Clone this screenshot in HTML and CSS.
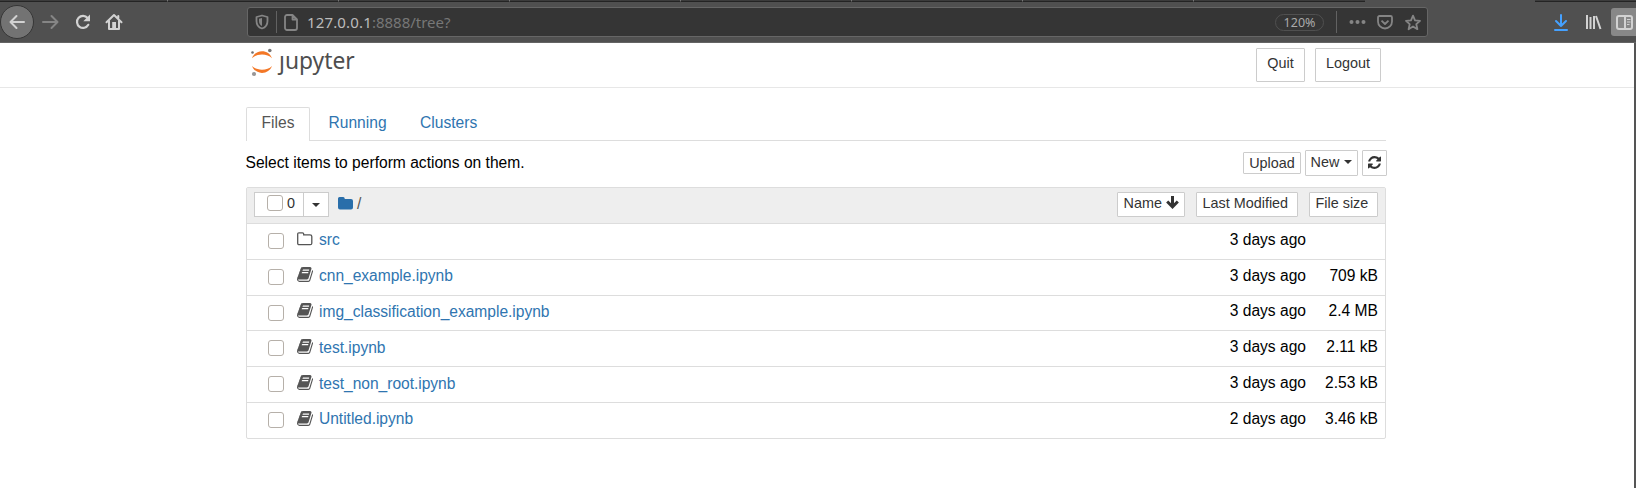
FILE: index.html
```
<!DOCTYPE html>
<html lang="en">
<head>
<meta charset="utf-8">
<title>Home Page - Jupyter</title>
<link rel="stylesheet" href="styles.css">
</head>
<body>
<svg class="defs" aria-hidden="true">
  <symbol id="book" viewBox="0 0 1664 1536"><path d="M1639 350q40 57 18 129l-275 906q-19 64-76.500 107.500t-122.500 43.500h-923q-77 0-148.500-53.500t-99.500-131.500q-24-67-2-127 0-4 3-27t4-37q1-8-3-21.500t-3-19.500q2-11 8-21t16.500-23.500 16.500-23.500q23-38 45-91.500t30-91.500q3-10 .5-30t-.5-28q3-11 17-28t17-23q21-36 42-92t25-90q1-9-2.500-32t.5-28q4-13 22-30.500t22-22.500q19-26 42.500-84.500t27.500-96.500q1-8-3-25.500t-2-26.500q2-8 9-18t18-23 17-21q8-12 16.500-30.500t15-35 16-36 19.500-32 26.500-23.500 36-11.500 47.500 5.500l-1 3q38-9 51-9h761q74 0 114 56t18 130l-274 906q-36 119-71.500 153.500t-128.500 34.500h-869q-27 0-38 15-11 16-1 43 24 70 144 70h923q29 0 56-15.500t35-41.500l300-987q7-22 5-57 38 15 59 43zM575 352q-4 13 2 22.500t20 9.500h608q13 0 25.500-9.500t16.500-22.500l21-64q4-13-2-22.500t-20-9.500h-608q-13 0-25.500 9.500t-16.500 22.500zM492 608q-4 13 2 22.500t20 9.500h608q13 0 25.500-9.500t16.500-22.500l21-64q4-13-2-22.500t-20-9.500h-608q-13 0-25.500 9.500t-16.500 22.500z"/></symbol>
</svg>
<div class="browser">
  <div class="strip"><i class="t first"></i><i class="t"></i><i class="t"></i><i class="t"></i><i class="t"></i><i class="t"></i><i class="t"></i><i class="t"></i><i class="active"></i><i class="t last"></i></div>
  <div class="bar">
    <div class="nav">
      <span class="back"><svg width="18" height="18" viewBox="0 0 18 18"><path d="M16 9H2.500M8.500 3l-6 6 6 6"/></svg></span>
      <svg class="fwd" width="18" height="18" viewBox="0 0 18 18"><path d="M1 9h14M9.500 3l6 6-6 6"/></svg>
      <svg class="rel" width="18" height="18" viewBox="0 0 18 18"><path d="M14.300 11.800A6 6 0 1 1 13.600 5"/><path class="solid" d="M16 1.500v6.700h-6.700z"/></svg>
      <svg class="home" width="18" height="18" viewBox="0 0 18 18"><path d="M1.500 9.300L9 2l7.500 7.300M4 8v8h10V8M13.300 3v3"/><path class="solid" d="M7.200 9h3.800v7H7.200z"/></svg>
    </div>
    <div class="url">
      <svg width="14" height="16" viewBox="0 0 14 16"><path d="M7 1.500L12.500 3v4c0 4-2 6.500-5.500 7.500C3.500 13.500 1.500 11 1.500 7V3z"/><path class="fill" d="M7 4v8C5 11 4 9.500 4 7V4.800z"/></svg>
      <i class="sep"></i>
      <svg class="page" width="14" height="17" viewBox="0 0 14 17"><path d="M3 1h5.500l4.500 4.500V14a2 2 0 0 1-2 2H3a2 2 0 0 1-2-2V3a2 2 0 0 1 2-2zM8.500 1v4.500H13"/></svg>
      <span class="addr"><b>127.0.0.1</b>:8888/tree?</span>
      <span class="pct">120%</span>
      <i class="sep s2"></i>
      <svg class="dots" width="17" height="6" viewBox="0 0 17 6"><circle cx="2.500" cy="3" r="2"/><circle cx="8.500" cy="3" r="2"/><circle cx="14.500" cy="3" r="2"/></svg>
      <svg class="pocket" width="16" height="15" viewBox="0 0 16 15"><path d="M2.500 1h11A1.500 1.500 0 0 1 15 2.500V6.500a7 7 0 0 1-14 0v-4A1.500 1.500 0 0 1 2.500 1zM4.500 5.700L8 9l3.500-3.300"/></svg>
      <svg class="star" width="16" height="17" viewBox="0 0 16 17"><path d="M8 1.600l2 4.700 5 .5-3.700 3.400 1.100 5L8 12.500l-4.400 2.700 1.100-5L1 6.800l5-.5z"/></svg>
    </div>
    <div class="tools">
      <svg width="14" height="17" viewBox="0 0 14 17"><path class="blue" d="M7 1v11M2 7l5 5 5-5M1 16h12"/></svg>
      <svg class="lib" width="17" height="16" viewBox="0 0 17 16"><path d="M2 1v14M5.500 3v12M9 2v13M11 2l4.500 13"/></svg>
      <span class="side"><svg width="17" height="15" viewBox="0 0 17 15"><rect x="1" y="1" width="15" height="13" rx="2"/><path d="M9 1v13"/><path class="thin" d="M11 4.500h3.500M11 7h3.500M11 9.500h2.500"/></svg></span>
    </div>
  </div>
</div>
<div class="viewport">
  <header>
    <div class="container head">
      <div class="logo">
        <svg width="24" height="30" viewBox="0 0 24 30"><path fill="#f37726" d="M2 10.200C3.600 5.800 7.500 3.200 12 3.200s8.400 2.600 10 7c-2.500-2.600-6-3.800-10-3.800s-7.500 1.200-10 3.800zM2 18c2.500 2.500 6 3.700 10 3.700s7.500-1.200 10-3.700c-1.600 4.300-5.500 6.900-10 6.900S3.600 22.300 2 18z"/><circle cx="19.800" cy="2.500" r="1.800" fill="#767677"/><circle cx="4" cy="26" r="2.100" fill="#989798"/><circle cx="2.500" cy="4.500" r="1.300" fill="#6f7070"/></svg>
        <span>ȷupyter</span>
      </div>
      <div class="auth"><button class="big">Quit</button><button class="big">Logout</button></div>
    </div>
  </header>
  <main class="container">
    <nav class="tabs"><a class="on">Files</a><a>Running</a><a>Clusters</a></nav>
    <div class="actions">
      <span>Select items to perform actions on them.</span>
      <div class="btns"><button class="upload">Upload</button><button class="new">New<i class="caret"></i></button><button class="refresh"><svg width="13" height="13" viewBox="0 0 1536 1536"><path d="M1511 928q0 5-1 7-64 268-268 434.500T764 1536q-146 0-282.500-55T238 1324l-129 129q-19 19-45 19t-45-19-19-45V960q0-26 19-45t45-19h448q26 0 45 19t19 45-19 45l-137 137q71 66 161 102t187 36q134 0 250-65t186-179q11-17 53-117 8-23 30-23h192q13 0 22.500 9.500t9.500 22.500zm25-800v448q0 26-19 45t-45 19h-448q-26 0-45-19t-19-45 19-45l138-138Q969 256 768 256q-134 0-250 65T332 500q-11 17-53 117-8 23-30 23H50q-13 0-22.500-9.500T18 608v-7q65-268 270-434.500T768 0q146 0 284 55.500T1297 212l130-129q19-19 45-19t45 19 19 45z"/></svg></button></div>
    </div>
    <div class="list">
      <div class="row lhead">
        <div class="select"><span class="all"><i class="check"></i>0</span><span class="drop"><i class="caret"></i></span></div>
        <svg class="folder" width="15" height="13" viewBox="0 0 15 13"><path d="M1.500 0h3.700q1.500 0 1.500 1.500V2h6.300q2 0 2 2v6.500q0 2-2 2H2q-2 0-2-2v-9Q0 0 1.500 0z"/></svg><span class="slash">/</span>
        <div class="sorts"><button class="name">Name <svg width="13" height="13" viewBox="0 0 13 13"><path d="M6.500 0v10.500M1.200 5.500l5.300 5.300 5.300-5.300"/></svg></button><button class="mod">Last Modified</button><button class="size">File size</button></div>
      </div>
      <div class="row"><i class="check"></i><svg class="icon open" width="16" height="14" viewBox="0 0 16 14"><path d="M2 .8h3.500q1.200 0 1.200 1.200v.8H13q1.800 0 1.800 1.700v6.700q0 1.500-1.500 1.500H2.200Q.7 12.700.7 11.200V2.300Q.7.800 2 .8z"/></svg><a>src</a><span class="date">3 days ago</span><span class="bytes"></span></div>
      <div class="row"><i class="check"></i><svg class="icon" width="16" height="15"><use href="#book"/></svg><a>cnn_example.ipynb</a><span class="date">3 days ago</span><span class="bytes">709 kB</span></div>
      <div class="row"><i class="check"></i><svg class="icon" width="16" height="15"><use href="#book"/></svg><a>img_classification_example.ipynb</a><span class="date">3 days ago</span><span class="bytes">2.4 MB</span></div>
      <div class="row"><i class="check"></i><svg class="icon" width="16" height="15"><use href="#book"/></svg><a>test.ipynb</a><span class="date">3 days ago</span><span class="bytes">2.11 kB</span></div>
      <div class="row"><i class="check"></i><svg class="icon" width="16" height="15"><use href="#book"/></svg><a>test_non_root.ipynb</a><span class="date">3 days ago</span><span class="bytes">2.53 kB</span></div>
      <div class="row"><i class="check"></i><svg class="icon" width="16" height="15"><use href="#book"/></svg><a>Untitled.ipynb</a><span class="date">2 days ago</span><span class="bytes">3.46 kB</span></div>
    </div>
  </main>
</div>
</body>
</html>
```
FILE: styles.css
```
* { box-sizing: border-box; }
body { margin: 0; height: 488px; overflow: hidden; background: #fff; color: #000; font: 15.6px/22px "Liberation Sans", Arial, sans-serif; }
svg { display: block; flex: none; fill: none; }
.defs { position: absolute; width: 0; height: 0; }
button { font: inherit; font-size: 14.4px; line-height: 20px; color: #333; background: #fff; border: 1px solid #ccc; border-radius: 1px; padding: 0; white-space: nowrap; }

/* Browser toolbar */
.browser { height: 43px; background: #505050; border-bottom: 1px solid #646464; }
.strip { display: flex; height: 2px; }
.strip i { height: 2px; }
.t { width: 171px; background: #3c3c3c; border-bottom: 1px solid #242424; border-right: 1px solid #777; }
.t.first { width: 168px; }
.strip .t:nth-child(8) { width: 171px; border-right: 0; }
.active { width: 170px; }
.t.last { width: auto; flex: 1; border-right: 0; }
.bar { display: flex; height: 40px; align-items: flex-start; }
.nav { display: flex; width: 247px; padding: 3px 0 0 0; align-items: center; }
.nav svg { stroke: #d2d2d2; stroke-width: 2; stroke-linecap: round; stroke-linejoin: round; }
.nav .solid { fill: #d2d2d2; stroke: none; }
.back { display: flex; width: 34px; height: 34px; align-items: center; justify-content: center; border-radius: 50%; background: #737373; border: 1px solid #363636; }
.nav .fwd { margin-left: 8px; stroke: #858585; }
.nav .rel { margin-left: 14px; stroke-width: 2.2; }
.nav .home { margin-left: 13px; }
.url { display: flex; align-items: center; width: 1181px; height: 30px; margin-top: 5px; padding: 0 6px 0 7px; background: #353535; border: 1px solid #666; border-radius: 3px; }
.url svg { stroke: #858585; stroke-width: 1.8; stroke-linejoin: round; }
.url .fill, .url .dots { fill: #858585; stroke: none; }
.sep { width: 1px; height: 22px; margin: 0 7px; background: #626262; }
.addr { margin-left: 9px; font: 15px/20px "Noto Sans", sans-serif; color: #777; }
.addr b { font-weight: 400; color: #bcbcbc; letter-spacing: .15px; }
.pct { width: 49px; height: 17px; margin-left: auto; border: 1px solid #505050; border-radius: 9px; text-align: center; font: 12.5px/15px "Noto Sans", sans-serif; color: #aaa; }
.s2 { margin: 0 12px; }
.pocket { margin-left: 11px; }
.star { margin-left: 12px; }
.tools { display: flex; flex: 1; height: 28px; margin-top: 6px; margin-left: 126px; align-items: center; }
.tools svg { stroke: #d2d2d2; stroke-width: 2; }
.tools .blue { stroke: #45a1ff; stroke-linecap: round; stroke-linejoin: round; }
.tools .lib { margin-left: 17px; }
.side { display: flex; align-items: center; width: 25px; height: 28px; margin-left: auto; padding-left: 5px; background: #888; border-radius: 3px 0 0 3px; }
.tools .thin { stroke-width: 1; }

/* Page */
.viewport { height: 445px; border-right: 2px solid #555; }
.container { width: 1140px; margin-left: 246px; }
header { height: 45px; border-bottom: 1px solid #e7e7e7; }
.head { display: flex; justify-content: space-between; }
.logo { display: flex; padding: 5px 0 0 4px; }
.logo span { margin: 0 0 0 5px; font: 22.8px/26px "Noto Sans", sans-serif; color: #4e4e4e; }
.auth { display: flex; gap: 10px; padding: 5px 5px 0 0; }
.big { width: 49px; height: 34px; padding-bottom: 4px; }
.big + .big { width: 66px; }
.tabs { display: flex; height: 34px; margin-top: 19px; border-bottom: 1px solid #ddd; }
.tabs a { padding: 5px 0 0 20px; color: #2f75b0; }
.tabs .on { width: 64px; height: 34px; padding-left: 14.5px; padding-top: 4px; background: #fff; border: 1px solid #ddd; border-bottom: 0; border-radius: 2px 2px 0 0; color: #555; }
.tabs a + a { padding-left: 18.5px; }
.tabs a + a + a { padding-left: 33.5px; }
.actions { display: flex; height: 46px; justify-content: space-between; padding-top: 9px; }
.actions > span { padding-top: 2px; margin-left: -.5px; }
.btns { display: flex; gap: 4px; align-items: flex-start; margin-right: -1px; }
.upload { width: 58px; height: 22px; margin-top: 2px; }
.new { width: 53px; height: 26px; padding-bottom: 3px; }
.refresh { display: flex; width: 25px; height: 26px; align-items: center; justify-content: center; padding-bottom: 2px; }
.refresh svg { fill: #333; }
.caret { display: inline-block; margin-left: 5px; vertical-align: 3px; border: 4px solid transparent; border-top-color: #333; border-bottom: 0; }
.list { height: 252px; border: 1px solid #ddd; border-radius: 2px; }
.row { display: flex; height: 35.83px; padding: 0 7px 0 21px; border-top: 1px solid #ddd; }
.check { flex: none; width: 16px; height: 16px; margin-top: 9px; background: #fff; border: 1px solid #b6b0a9; border-radius: 3px; }
.row a { margin: 5.3px 0 0 6px; color: #2f75b0; letter-spacing: -.03px; }
.icon { margin: 7.5px 0 0 13px; fill: #555; }
.open { fill: none; stroke: #555; stroke-width: 1.3; }
.date { margin: 4.8px 0 0 auto; }
.bytes { width: 72px; margin-top: 4.8px; text-align: right; }
.lhead { height: 35px; padding: 4px 8px 0 7px; background: #eee; border: 0; }
.select { display: flex; width: 75px; height: 25px; background: #fff; border: 1px solid #ccc; }
.all { display: flex; width: 49px; padding-left: 12px; gap: 4px; font-size: 14.4px; line-height: 20px; color: #333; border-right: 1px solid #ccc; }
.all .check { margin-top: 2px; }
.drop { display: flex; flex: 1; align-items: center; justify-content: center; }
.drop .caret { margin: 0; }
.folder { margin: 5px 0 0 9px; fill: #296eaa; }
.slash { margin: 1px 0 0 4px; color: #555; }
.sorts { display: flex; margin-left: auto; margin-right: -1px; gap: 11px; }
.sorts button { height: 25px; padding: 0 0 3px 5.5px; text-align: left; }
.name { width: 68px; }
.name svg { display: inline-block; vertical-align: -1px; stroke: #333; stroke-width: 3; }
.mod { width: 102px; }
.size { width: 69px; }
```
